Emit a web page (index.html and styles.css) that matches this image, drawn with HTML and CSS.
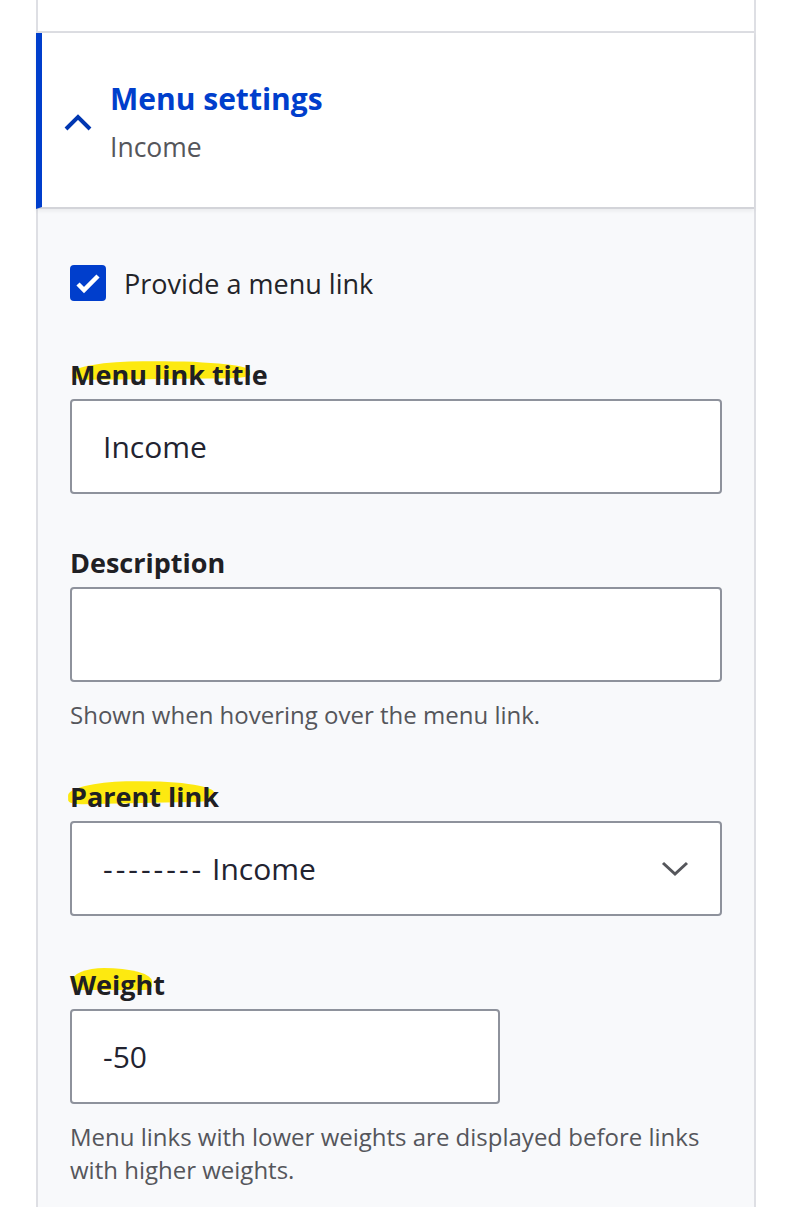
FILE: index.html
```html
<!DOCTYPE html>
<html lang="en">
<head>
<meta charset="utf-8">
<title>Menu settings</title>
<link rel="stylesheet" href="styles.css">
</head>
<body>
<div class="panel">
  <div class="prev"></div>
  <div class="summary">
    <svg class="chev-up" width="30" height="20" viewBox="0 0 30 20" aria-hidden="true">
      <polyline points="2,16 14,4 26,16" fill="none" stroke="#0036b1" stroke-width="4"/>
    </svg>
    <div class="summary-text">
      <div class="summary-title">Menu settings</div>
      <div class="summary-sub">Income</div>
    </div>
  </div>
  <div class="content">
    <label class="check-row">
      <span class="checkbox">
        <svg width="36" height="36" viewBox="0 0 36 36" aria-hidden="true">
          <polyline points="8,19 14,25 28,11" fill="none" stroke="#fff" stroke-width="4.5"/>
        </svg>
      </span>
      <span class="check-label">Provide a menu link</span>
    </label>

    <div class="form-item">
      <div class="label"><span class="hl hl-title">Menu link title</span></div>
      <div class="input">Income</div>
    </div>

    <div class="form-item">
      <div class="label">Description</div>
      <div class="input"></div>
      <div class="desc">Shown when hovering over the menu link.</div>
    </div>

    <div class="form-item">
      <div class="label"><span class="hl hl-parent">Parent link</span></div>
      <div class="input select">
        <span><span class="dashes">--------</span> Income</span>
        <svg class="chev-down" width="30" height="20" viewBox="0 0 30 20" aria-hidden="true">
          <polyline points="3,4 15,15 27,4" fill="none" stroke="#55565b" stroke-width="3"/>
        </svg>
      </div>
    </div>

    <div class="form-item">
      <div class="label"><span class="hl hl-weight">Weight</span></div>
      <div class="input short">-50</div>
      <div class="desc">Menu links with lower weights are displayed before links with higher weights.</div>
    </div>
  </div>
</div>
</body>
</html>
```
FILE: styles.css
```css
html, body {
  margin: 0;
  padding: 0;
  background: #ffffff;
}
body {
  font-family: "Open Sans", "Noto Sans", sans-serif;
  color: #232429;
}
.panel {
  margin-left: 36px;
  width: 716px;
  border-left: 2px solid #dedfe4;
  border-right: 2px solid #dedfe4;
  min-height: 1207px;
  background: #f8f9fb;
}
.prev {
  height: 31px;
  background: #ffffff;
  border-bottom: 2px solid #dcdde2;
}
.summary {
  height: 176px;
  background: #ffffff;
  border-left: 6px solid #003ecc;
  margin-left: -2px;
  border-bottom: 2px solid #d3d4d9;
  box-shadow: 0 2px 4px rgba(0, 0, 0, 0.06);
  display: flex;
  align-items: center;
  box-sizing: border-box;
}
.chev-up {
  margin-left: 22px;
  margin-top: 6px;
  flex: none;
}
.summary-text {
  margin-left: 16px;
  padding-top: 4px;
}
.summary-title {
  font-size: 30px;
  font-weight: 700;
  color: #003ecc;
  line-height: 44px;
}
.summary-sub {
  font-size: 26.5px;
  color: #55565b;
  line-height: 40px;
  margin-top: 6px;
}
.content {
  padding: 56px 32px 0 32px;
}
.check-row {
  display: flex;
  align-items: center;
  gap: 18px;
  height: 36px;
}
.checkbox {
  width: 36px;
  height: 36px;
  border-radius: 4px;
  background: #003ecc;
  display: block;
}
.checkbox svg {
  display: block;
}
.check-label {
  font-size: 27px;
  color: #232429;
}
.form-item {
  margin-top: 56px;
}
.form-item + .form-item {
  margin-top: 51px;
}
.label {
  font-size: 27px;
  font-weight: 700;
  line-height: 36px;
  margin-bottom: 6px;
  color: #1f2024;
}
.hl {
  position: relative;
  z-index: 0;
  display: inline-block;
}
.hl::before {
  content: "";
  position: absolute;
  z-index: -1;
  background: #fde910;
  border-radius: 40% 60% 10% 10% / 60% 60% 20% 20%;
}
.hl-title::before {
  left: 2px;
  top: 4px;
  width: 178px;
  height: 18px;
  transform: rotate(-0.6deg);
}
.hl-parent::before {
  left: -2px;
  top: 2px;
  width: 146px;
  height: 22px;
  transform: rotate(-1.2deg);
}
.hl-weight::before {
  left: 2px;
  top: 1px;
  width: 80px;
  height: 22px;
}
.input {
  box-sizing: border-box;
  height: 95px;
  background: #ffffff;
  border: 2px solid #8e929c;
  border-radius: 4px;
  padding: 0 31px;
  font-size: 30px;
  color: #222330;
  display: flex;
  align-items: center;
}
.select {
  justify-content: space-between;
  padding-right: 30px;
}
.dashes {
  letter-spacing: 3px;
}
.short {
  width: 430px;
}
.desc {
  font-size: 24px;
  color: #55565b;
  line-height: 33px;
  margin-top: 16px;
  margin-bottom: -3px;
}
```
